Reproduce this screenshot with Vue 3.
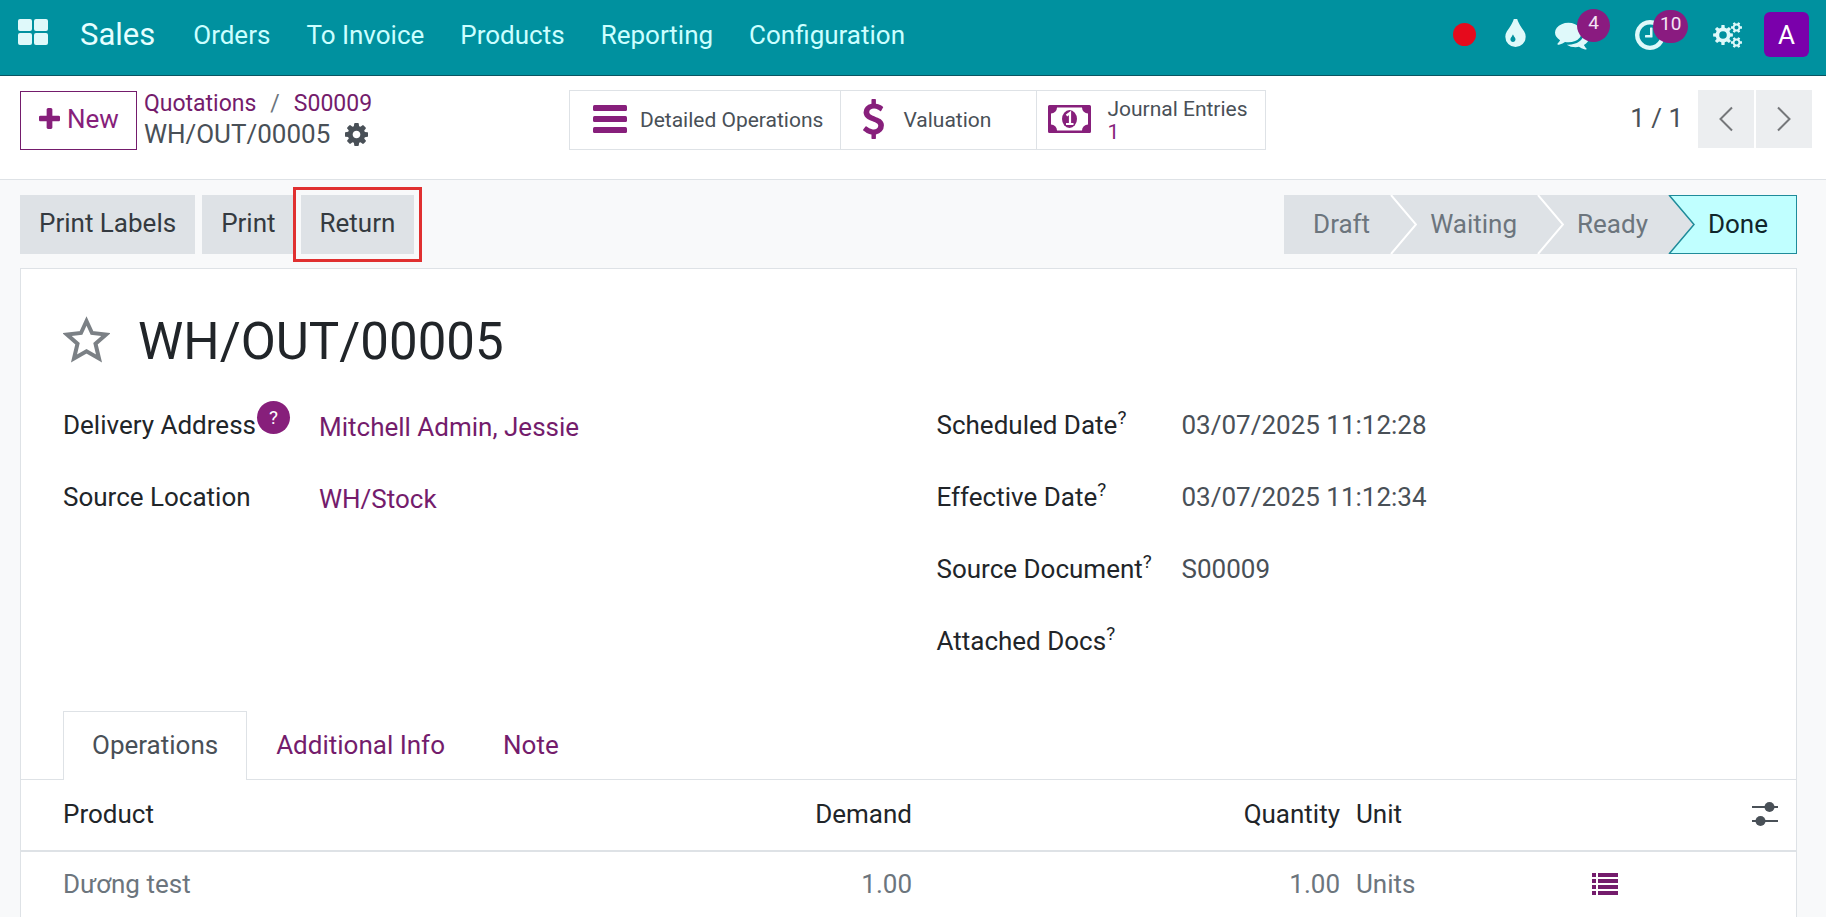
<script setup>
import { ref } from 'vue'

const menus = ['Orders', 'To Invoice', 'Products', 'Reporting', 'Configuration']
const steps = ['Draft', 'Waiting', 'Ready', 'Done']
const current = 'Done'
const tabs = ['Operations', 'Additional Info', 'Note']
const activeTab = ref('Operations')
const left = [
  { label: 'Delivery Address', value: 'Mitchell Admin, Jessie', badge: true },
  { label: 'Source Location', value: 'WH/Stock' },
]
const right = [
  { label: 'Scheduled Date', value: '03/07/2025 11:12:28' },
  { label: 'Effective Date', value: '03/07/2025 11:12:34' },
  { label: 'Source Document', value: 'S00009' },
  { label: 'Attached Docs', value: '' },
]
const lines = [{ product: 'Dương test', demand: '1.00', quantity: '1.00', unit: 'Units' }]

// Outline of a toothed wheel with a round hole
function gear(cx, cy, root, tip, hole, teeth) {
  const at = (r, a) => `${(cx + r * Math.cos(a)).toFixed(2)} ${(cy + r * Math.sin(a)).toFixed(2)}`
  const step = (Math.PI * 2) / teeth
  const pts = []
  for (let i = 0; i < teeth; i++) {
    const a = i * step
    pts.push(at(root, a - step * 0.3), at(tip, a - step * 0.2), at(tip, a + step * 0.2), at(root, a + step * 0.3))
  }
  return `M${pts.join('L')}ZM${cx - hole} ${cy}a${hole} ${hole} 0 1 0 ${hole * 2} 0a${hole} ${hole} 0 1 0 ${-hole * 2} 0Z`
}
const cogs = [
  gear(10, 13, 7.5, 10, 3.8, 8),
  gear(23.5, 5.5, 4, 5.6, 2, 6),
  gear(23.5, 20.5, 4, 5.6, 2, 6),
].join('')
</script>

<template>
  <div class="app">
    <nav class="navbar">
      <button class="icon-btn apps" aria-label="Apps">
        <svg width="30" height="26" viewBox="0 0 30 26">
          <rect x="0" y="0" width="14" height="12" rx="2" />
          <rect x="16" y="0" width="14" height="12" rx="2" />
          <rect x="0" y="14" width="14" height="12" rx="2" />
          <rect x="16" y="14" width="14" height="12" rx="2" />
        </svg>
      </button>
      <a href="#" class="brand">Sales</a>
      <a v-for="m in menus" :key="m" href="#" class="menu">{{ m }}</a>
      <div class="systray">
        <span class="record"></span>
        <button class="icon-btn drop" aria-label="Theme">
          <svg width="21" height="28" viewBox="384 128 1024 1408">
            <path d="M896 1152q0-36-20-69-1-1-15.500-22.500t-25.500-38-25-44-21-50.500q-4-16-21-16t-21 16q-7 23-21 50.500t-25 44-25.500 38-15.500 22.500q-20 33-20 69 0 53 37.500 90.500t90.500 37.500 90.500-37.500 37.500-90.500zm512-128q0 212-150 362t-362 150-362-150-150-362q0-145 81-275 6-9 62.500-90.500t101-151 99.500-178 83-201.500q9-30 34-47t51-17 51.500 17 33.500 47q28 93 83 201.500t99.500 178 101 151 62.500 90.500q81 127 81 275z" />
          </svg>
        </button>
        <button class="icon-btn chat" aria-label="Messages">
          <svg width="34" height="34" viewBox="0 0 1792 1792">
            <path d="M1408 768q0 139-94 257t-256.500 186.500-353.500 68.500q-86 0-176-16-124 88-278 128-36 9-86 16h-3q-11 0-20.500-8t-11.500-21q-1-3-1-6.500t.5-6.500 2-6l2.500-5 3.500-5.500 4-5 4.500-5 4-4.500q5-6 23-25t26-29.500 22.500-29 25-38.500 20.500-44q-124-72-195-177t-71-224q0-139 94-257t256.500-186.500 353.500-68.500 353.500 68.500 256.500 186.500 94 257zm384 256q0 120-71 224.500t-195 176.500q10 24 20.500 44t25 38.500 22.500 29 26 29.500 23 25q1 1 4 4.500t4.500 5 4 5 3.500 5.500l2.500 5 2 6 .5 6.500-1 6.500q-3 14-13 22t-22 7q-50-7-86-16-154-40-278-128-90 16-176 16-271 0-472-132 58 4 88 4 161 0 309-45t264-129q125-92 192-212t67-254q0-77-23-152 129 71 204 178t75 230z" />
          </svg>
          <span class="count">4</span>
        </button>
        <button class="icon-btn clock" aria-label="Activities">
          <svg width="30" height="30" viewBox="128 128 1536 1536">
            <path d="M1024 544v448q0 14-9 23t-23 9h-320q-14 0-23-9t-9-23v-64q0-14 9-23t23-9h224v-352q0-14 9-23t23-9h64q14 0 23 9t9 23zm416 352q0-148-73-273t-198-198-273-73-273 73-198 198-73 273 73 273 198 198 273 73 273-73 198-198 73-273zm224 0q0 209-103 385.500t-279.500 279.500-385.500 103-385.500-103-279.500-279.500-103-385.500 103-385.500 279.500-279.500 385.500-103 385.500 103 279.500 279.500 103 385.500z" />
          </svg>
          <span class="count">10</span>
        </button>
        <button class="icon-btn cogs" aria-label="Developer tools">
          <svg width="29" height="26" viewBox="0 0 29 26">
            <path :d="cogs" fill-rule="evenodd" />
          </svg>
        </button>
        <button class="avatar">A</button>
      </div>
    </nav>

    <header class="panel">
      <button class="new">
        <svg width="21" height="21" viewBox="192 128 1408 1408">
          <path d="M1600 736v192q0 40-28 68t-68 28h-416v416q0 40-28 68t-68 28h-192q-40 0-68-28t-28-68v-416h-416q-40 0-68-28t-28-68v-192q0-40 28-68t68-28h416v-416q0-40 28-68t68-28h192q40 0 68 28t28 68v416h416q40 0 68 28t28 68z" />
        </svg>
        New
      </button>
      <div class="crumbs">
        <div class="trail">
          <a href="#">Quotations</a><span class="slash">/</span><a href="#">S00009</a>
        </div>
        <div class="here">
          <span>WH/OUT/00005</span>
          <button class="icon-btn gear" aria-label="Actions">
            <svg width="23" height="23" viewBox="128 128 1536 1536">
              <path d="M1152 896q0-106-75-181t-181-75-181 75-75 181 75 181 181 75 181-75 75-181zm512-109v222q0 12-8 23t-20 13l-185 28q-19 54-39 91 35 50 107 138 10 12 10 25t-9 23q-27 37-99 108t-94 71q-12 0-26-9l-138-108q-44 23-91 38-16 136-29 186-7 28-36 28h-222q-14 0-24.500-8.500t-11.500-21.500l-28-184q-49-16-90-37l-141 107q-10 9-25 9-14 0-25-11-126-114-165-168-7-10-7-23 0-12 8-23 15-21 51-66.500t54-70.500q-27-50-41-99l-183-27q-13-2-21-12.500t-8-23.500v-222q0-12 8-23t19-13l186-28q14-46 39-92-40-57-107-138-10-12-10-24 0-10 9-23 26-36 98.500-107.500t94.500-71.500q13 0 26 10l138 107q44-23 91-38 16-136 29-186 7-28 36-28h222q14 0 24.500 8.500t11.500 21.500l28 184q49 16 90 37l142-107q9-9 24-9 13 0 25 10 129 119 165 170 7 8 7 22 0 12-8 23-15 21-51 66.500t-54 70.500q26 50 41 98l183 28q13 2 21 12.500t8 23.500z" />
            </svg>
          </button>
        </div>
      </div>
      <div class="stats">
        <button class="stat">
          <span class="stat-icon">
            <svg width="34" height="28" viewBox="0 0 34 28">
              <rect y="0" width="34" height="6" rx="1.500" />
              <rect y="11" width="34" height="6" rx="1.500" />
              <rect y="22" width="34" height="6" rx="1.500" />
            </svg>
          </span>
          <span>Detailed Operations</span>
        </button>
        <button class="stat valuation">
          <span class="stat-icon">
            <svg width="21" height="40" viewBox="430 0 932 1792">
              <path d="M1362 1185q0 153-99.500 263.500t-258.500 136.500v175q0 14-9 23t-23 9h-135q-13 0-22.500-9.500t-9.500-22.500v-175q-66-9-127.500-31t-101.500-44.500-74-48-46.500-37.500-17.500-18q-17-21-2-41l103-135q7-10 23-12 15-2 24 9l2 2q113 99 243 125 37 8 74 8 81 0 142.500-43t61.500-122q0-28-15-53t-33.500-42-58.500-37.500-66-32-80-32.500q-39-16-61.500-25t-61.500-26.500-62.500-31-56.500-35.500-53.500-42.500-43.500-49-35.500-58-21-66.500-8.500-78q0-138 98-242t255-134v-180q0-13 9.500-22.500t22.500-9.500h135q14 0 23 9t9 23v176q57 6 110.500 23t87 33.500 63.500 37.500 39 29 15 14q17 18 5 38l-81 146q-8 15-23 16-14 3-27-7-3-3-14.500-12t-39-26.500-58.500-32-74.500-26-85.500-11.500q-95 0-155 43t-60 111q0 26 8.500 48t29.500 41.500 39.500 33 56 31 60.500 27 70 27.500q53 20 81 31.500t76 35 75.500 42.500 62 50 53 63.500 31.500 76.500 13 94z" />
            </svg>
          </span>
          <span>Valuation</span>
        </button>
        <button class="stat">
          <span class="stat-icon">
            <svg width="43" height="28" viewBox="0 0 43 28">
              <path fill-rule="evenodd" d="M1.500 0h40a1.500 1.500 0 0 1 1.500 1.500v25a1.500 1.500 0 0 1-1.500 1.500h-40a1.500 1.500 0 0 1-1.500-1.500v-25a1.500 1.500 0 0 1 1.500-1.500zM9 2.500a6 6 0 0 1-6 6v11a6 6 0 0 1 6 6h25a6 6 0 0 1 6-6v-11a6 6 0 0 1-6-6z" />
              <ellipse cx="21.500" cy="14" rx="7.500" ry="9" />
              <path d="M18.500 10.500l3.500-2.500v10.500M18 19h7.500" fill="none" stroke="#fff" stroke-width="2.200" />
            </svg>
          </span>
          <span class="two">Journal Entries<b>1</b></span>
        </button>
      </div>
      <div class="pager">
        <span class="pos">1 / 1</span>
        <button aria-label="Previous">
          <svg width="16" height="26" viewBox="0 0 16 26"><path d="M14 1.500L2.500 13L14 24.500" /></svg>
        </button>
        <button aria-label="Next">
          <svg width="16" height="26" viewBox="0 0 16 26"><path d="M2 1.500L13.500 13L2 24.500" /></svg>
        </button>
      </div>
    </header>

    <main class="content">
      <div class="statusbar">
        <button class="action">Print Labels</button>
        <button class="action">Print</button>
        <span class="highlight"><button class="action">Return</button></span>
        <div class="steps">
          <button v-for="(s, i) in steps" :key="s" class="step" :class="{ current: s === current }">
            <svg v-if="i" class="edge" width="27" height="59" viewBox="0 0 27 59">
              <path class="behind" d="M0 0H1L26 29.500L1 59H0Z" />
              <path class="line" d="M1 0L26 29.500L1 59" />
            </svg>
            {{ s }}
          </button>
        </div>
      </div>

      <section class="sheet">
        <div class="title">
          <button class="icon-btn star" aria-label="Favorite">
            <svg width="47" height="48" viewBox="0 0 47 48">
              <path d="M23.500 5L29 17L43 18.600L32.500 27.800L36 42.500L23.500 35.200L11 42.500L14.500 27.800L4 18.600L18 17Z" />
            </svg>
          </button>
          <h1>WH/OUT/00005</h1>
        </div>
        <div class="groups">
          <dl class="group wide">
            <div v-for="f in left" :key="f.label" class="field">
              <dt>{{ f.label }}<sup v-if="f.badge" class="bubble">?</sup></dt>
              <dd><a href="#">{{ f.value }}</a></dd>
            </div>
          </dl>
          <dl class="group narrow">
            <div v-for="f in right" :key="f.label" class="field">
              <dt>{{ f.label }}<sup>?</sup></dt>
              <dd>{{ f.value }}</dd>
            </div>
          </dl>
        </div>

        <div class="tabs" role="tablist">
          <button
            v-for="t in tabs"
            :key="t"
            class="tab"
            role="tab"
            :class="{ active: t === activeTab }"
            :aria-selected="t === activeTab"
            @click="activeTab = t"
          >{{ t }}</button>
        </div>
        <table class="lines">
          <colgroup>
            <col /><col class="c-demand" /><col class="c-qty" /><col class="c-unit" /><col class="c-list" /><col class="c-opt" />
          </colgroup>
          <thead>
            <tr>
              <th>Product</th>
              <th class="num">Demand</th>
              <th class="num">Quantity</th>
              <th>Unit</th>
              <th></th>
              <th class="opt">
                <button class="icon-btn" aria-label="Optional columns">
                  <svg width="26" height="24" viewBox="0 0 26 24">
                    <path d="M0 5H26M0 19H26" stroke="currentColor" stroke-width="2" />
                    <circle cx="17.500" cy="5" r="5" /><circle cx="8.500" cy="19" r="5" />
                  </svg>
                </button>
              </th>
            </tr>
          </thead>
          <tbody>
            <tr v-for="l in lines" :key="l.product">
              <td>{{ l.product }}</td>
              <td class="num">{{ l.demand }}</td>
              <td class="num">{{ l.quantity }}</td>
              <td>{{ l.unit }}</td>
              <td>
                <button class="icon-btn list" aria-label="Details">
                  <svg width="26" height="22" viewBox="0 0 26 22">
                    <path d="M0 0h4v4H0zM6 0h20v4H6zM0 6h4v4H0zM6 6h20v4H6zM0 12h4v4H0zM6 12h20v4H6zM0 18h4v4H0zM6 18h20v4H6z" />
                  </svg>
                </button>
              </td>
              <td></td>
            </tr>
          </tbody>
        </table>
      </section>
    </main>
  </div>
</template>

<style>
body {
  margin: 0;
  background: #f8f9fa;
}
</style>

<style scoped>
.app {
  min-height: 100vh;
  display: flex;
  flex-direction: column;
  box-sizing: border-box;
  font-family: Roboto, "Liberation Sans", sans-serif;
  font-size: 26px;
  line-height: 40px;
  color: #495057;
}
.app * {
  box-sizing: border-box;
}
button {
  font: inherit;
  color: inherit;
  border: 0;
  margin: 0;
  padding: 0;
  background: none;
  cursor: pointer;
}
a {
  color: #741c6c;
  text-decoration: none;
}
svg {
  display: block;
  fill: currentColor;
}
.icon-btn {
  position: relative;
  display: flex;
  align-items: center;
}

/* Top bar */
.navbar {
  display: flex;
  align-items: center;
  height: 76px;
  padding: 0 17px 6px 18px;
  background: #00919f;
  border-bottom: 1px solid #0a5562;
  color: #dff9fa;
}
.apps {
  padding-bottom: 5px;
}
.brand {
  margin: 0 20px 0 32px;
  font-size: 31px;
  color: #e6ffff;
}
.menu {
  padding: 0 18px;
  color: #ccffff;
}
.systray {
  display: flex;
  align-items: center;
  margin-left: auto;
}
.record {
  width: 23px;
  height: 23px;
  border-radius: 50%;
  background: #e60a1c;
}
.drop {
  margin-left: 29px;
  padding-bottom: 3px;
}
.chat {
  margin-left: 29px;
}
.clock {
  margin-left: 46px;
}
.cogs {
  margin-left: 48px;
}
.count {
  position: absolute;
  left: 22px;
  top: -9px;
  min-width: 33px;
  height: 33px;
  padding: 0 7px;
  border-radius: 17px;
  background: #8a1b80;
  color: #f4e4f4;
  font-size: 19px;
  line-height: 28px;
  text-align: center;
}
.clock .count {
  left: 18px;
  top: -10px;
}
.avatar {
  width: 45px;
  height: 45px;
  margin-left: 22px;
  border-radius: 6px;
  background: #7a00ab;
  color: #fff;
}

/* Control panel */
.panel {
  display: flex;
  align-items: flex-start;
  height: 104px;
  padding: 14px 14px 0 20px;
  background: #fff;
  border-bottom: 1px solid #dee2e6;
}
.new {
  display: flex;
  align-items: center;
  gap: 7px;
  height: 59px;
  margin-top: 1px;
  padding: 0 17px 4px 18px;
  border: 1px solid #741c6c;
  color: #871f7b;
}
.crumbs {
  width: 432px;
  padding: 0 0 0 7px;
}
.trail {
  font-size: 23px;
  line-height: 28px;
}
.slash {
  margin: 0 14px;
  color: #6c757d;
}
.here {
  display: flex;
  align-items: center;
  gap: 15px;
  line-height: 32px;
}
.stats {
  display: flex;
  border: 1px solid #dee2e6;
}
.stat {
  display: flex;
  align-items: center;
  height: 58px;
  padding: 0 17px 0 10px;
  font-size: 21px;
  line-height: 24px;
  text-align: left;
}
.stat + .stat {
  border-left: 1px solid #dee2e6;
}
.valuation {
  padding: 0 45px 0 2px;
}
.stat-icon {
  display: flex;
  justify-content: center;
  width: 60px;
  padding-bottom: 2px;
  color: #871f7b;
}
.stat:last-child .stat-icon {
  width: 44px;
  margin-right: 16px;
}
.two b {
  display: block;
  font-weight: 400;
  line-height: 22px;
  color: #871f7b;
}
.pager {
  display: flex;
  align-items: center;
  gap: 2px;
  margin-left: auto;
}
.pos {
  margin-right: 13px;
  padding-bottom: 2px;
}
.pager button {
  display: flex;
  align-items: center;
  justify-content: center;
  width: 56px;
  height: 58px;
  background: #eceef0;
}
.pager path {
  fill: none;
  stroke: #75777a;
  stroke-width: 2;
}

/* Buttons and status */
.content {
  flex: 1;
  display: flex;
  flex-direction: column;
  padding: 7px 29px 0 20px;
  background: #f8f9fa;
}
.statusbar {
  display: flex;
  align-items: center;
  height: 75px;
}
.action {
  height: 59px;
  padding: 0 19px 3px;
  background: #dee2e6;
  color: #343a40;
}
.action + .action {
  margin-left: 7px;
}
.highlight {
  display: flex;
  margin-left: -2px;
  padding: 5px;
  border: 3px solid #e03030;
  background: #f8f9fa;
}
.steps {
  display: flex;
  margin-left: auto;
}
.step {
  position: relative;
  height: 59px;
  padding: 0 20px 2px 40px;
  background: #dee2e6;
  color: #6c757d;
}
.step:first-child {
  padding-left: 29px;
}
.edge {
  position: absolute;
  left: 0;
  top: 0;
}
.behind {
  fill: #dee2e6;
}
.line {
  fill: none;
  stroke: #fff;
  stroke-width: 2;
}
.current {
  padding-right: 29px;
  background: #c0ffff;
  color: #10262b;
  box-shadow: inset 0 0 0 1px #1f8b9a;
}
.current .line {
  stroke: #1f8b9a;
  stroke-width: 1.500;
}

/* Sheet */
.sheet {
  flex: 1;
  margin-top: 6px;
  padding-top: 38px;
  background: #fff;
  border: 1px solid #dee2e6;
  border-bottom: 0;
}
.title {
  display: flex;
  align-items: center;
  padding: 0 42px;
}
.star {
  padding-bottom: 2px;
}
.star path {
  fill: none;
  stroke: #7b8085;
  stroke-width: 4;
}
h1 {
  margin: 0 0 0 28px;
  padding-top: 3px;
  font-size: 51px;
  font-weight: 400;
  line-height: 64px;
  color: #212529;
}
.groups {
  display: grid;
  grid-template-columns: 1fr 1fr;
  gap: 56px;
  margin-top: 17px;
  padding: 0 42px;
}
.group {
  margin: 0;
}
.field {
  display: grid;
  grid-template-columns: 256px 1fr;
  height: 72px;
  padding-top: 14px;
}
.narrow .field {
  grid-template-columns: 245px 1fr;
}
dt {
  white-space: nowrap;
  color: #212529;
}
dd {
  margin: 0;
}
.wide dd {
  padding-top: 2px;
}
sup {
  font-size: 19px;
  line-height: 0;
}
.bubble {
  display: inline-block;
  width: 33px;
  height: 33px;
  border-radius: 50%;
  background: #871f7b;
  color: #fff;
  line-height: 33px;
  text-align: center;
  margin: -12px 0 -12px 1px;
}
.tabs {
  display: flex;
  height: 69px;
  margin-top: 32px;
  padding-left: 42px;
  border-bottom: 1px solid #dee2e6;
}
.tab {
  height: 69px;
  padding: 0 28px 2px;
  border: 1px solid transparent;
  border-bottom: 0;
  color: #741c6c;
}
.active {
  border-color: #dee2e6;
  background: #fff;
  color: #495057;
}
.lines {
  width: 100%;
  table-layout: fixed;
  border-collapse: collapse;
}
.c-demand {
  width: 276px;
}
.c-qty {
  width: 428px;
}
.c-unit {
  width: 236px;
}
.c-list {
  width: 132px;
}
.c-opt {
  width: 80px;
}
th,
td {
  padding: 0 8px;
  text-align: left;
}
th {
  height: 71px;
  padding-bottom: 2px;
  border-bottom: 2px solid #dee2e6;
  font-weight: 400;
  color: #212529;
}
td {
  height: 64px;
  color: #6c757d;
}
th:first-child,
td:first-child {
  padding-left: 42px;
}
.lines .num {
  text-align: right;
}
.opt button {
  margin-left: auto;
  margin-right: 10px;
  color: #495057;
}
.list {
  color: #741c6c;
}
</style>
